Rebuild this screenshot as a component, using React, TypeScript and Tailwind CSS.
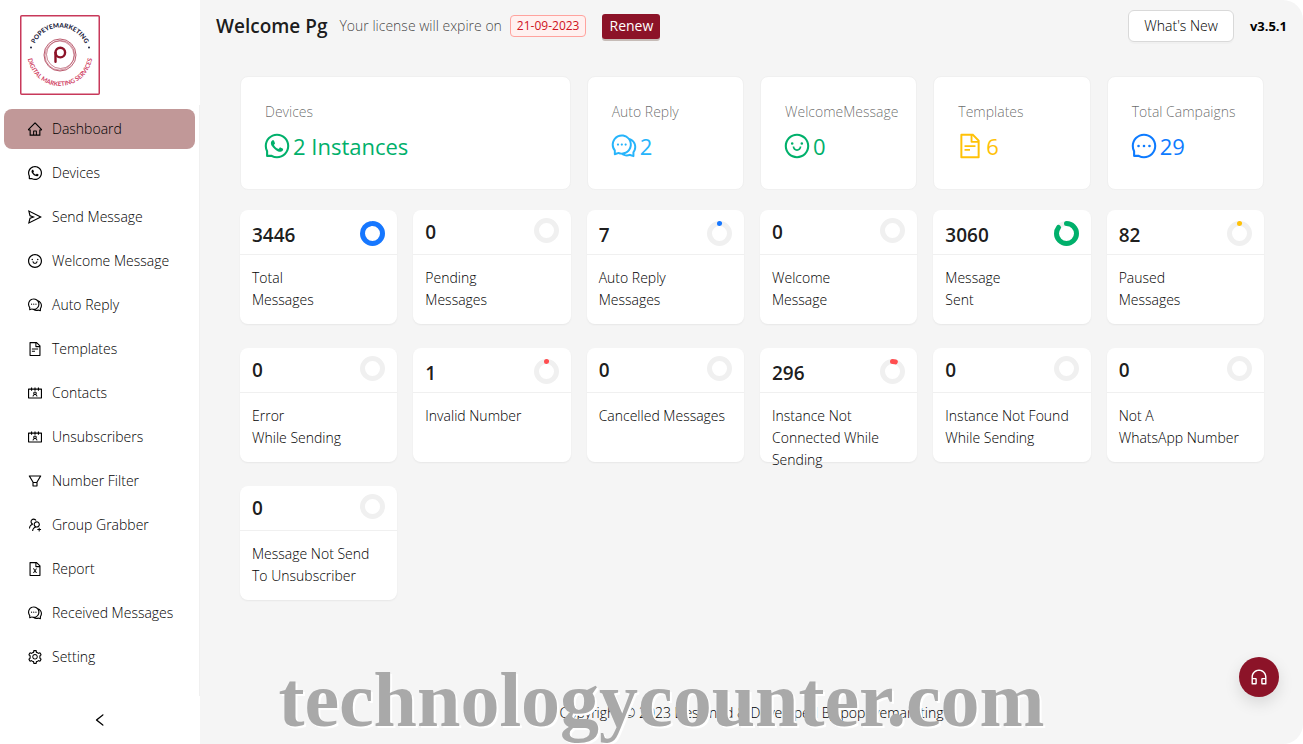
import clsx from 'clsx';
import type { ReactNode } from 'react';
import type { IconType } from 'react-icons';
import {
  AiOutlineComment,
  AiOutlineContacts,
  AiOutlineCustomerService,
  AiOutlineFileExcel,
  AiOutlineFileText,
  AiOutlineFilter,
  AiOutlineHome,
  AiOutlineLeft,
  AiOutlineMessage,
  AiOutlineSend,
  AiOutlineSetting,
  AiOutlineSmile,
  AiOutlineUsergroupAdd,
  AiOutlineWhatsApp,
} from 'react-icons/ai';

const menuItems: { label: string; icon: IconType; active?: boolean }[] = [
  { label: 'Dashboard', icon: AiOutlineHome, active: true },
  { label: 'Devices', icon: AiOutlineWhatsApp },
  { label: 'Send Message', icon: AiOutlineSend },
  { label: 'Welcome Message', icon: AiOutlineSmile },
  { label: 'Auto Reply', icon: AiOutlineComment },
  { label: 'Templates', icon: AiOutlineFileText },
  { label: 'Contacts', icon: AiOutlineContacts },
  { label: 'Unsubscribers', icon: AiOutlineContacts },
  { label: 'Number Filter', icon: AiOutlineFilter },
  { label: 'Group Grabber', icon: AiOutlineUsergroupAdd },
  { label: 'Report', icon: AiOutlineFileExcel },
  { label: 'Received Messages', icon: AiOutlineComment },
  { label: 'Setting', icon: AiOutlineSetting },
];

const summaries = [
  {
    label: 'Devices',
    value: '2 Instances',
    icon: AiOutlineWhatsApp,
    color: 'text-[#00b06b]',
    wide: true,
  },
  {
    label: 'Auto Reply',
    value: '2',
    icon: AiOutlineComment,
    color: 'text-[#26b4fb]',
  },
  {
    label: 'WelcomeMessage',
    value: '0',
    icon: AiOutlineSmile,
    color: 'text-[#00b06b]',
  },
  {
    label: 'Templates',
    value: '6',
    icon: AiOutlineFileText,
    color: 'text-[#ffc107]',
  },
  {
    label: 'Total Campaigns',
    value: '29',
    icon: AiOutlineMessage,
    color: 'text-[#0d7bff]',
  },
];

const TOTAL = 3446;

const stats = [
  { value: TOTAL, lines: ['Total', 'Messages'], color: '#1677ff' },
  { value: 0, lines: ['Pending', 'Messages'], color: '#1677ff' },
  { value: 7, lines: ['Auto Reply', 'Messages'], color: '#1677ff' },
  { value: 0, lines: ['Welcome', 'Message'], color: '#1677ff' },
  { value: 3060, lines: ['Message', 'Sent'], color: '#00b06b' },
  { value: 82, lines: ['Paused', 'Messages'], color: '#ffc107' },
  { value: 0, lines: ['Error', 'While Sending'], color: '#ff4d4f' },
  { value: 1, lines: ['Invalid Number'], color: '#ff4d4f' },
  { value: 0, lines: ['Cancelled Messages'], color: '#ff4d4f' },
  {
    value: 296,
    lines: ['Instance Not', 'Connected While', 'Sending'],
    color: '#ff4d4f',
  },
  {
    value: 0,
    lines: ['Instance Not Found', 'While Sending'],
    color: '#ff4d4f',
  },
  { value: 0, lines: ['Not A', 'WhatsApp Number'], color: '#ff4d4f' },
  {
    value: 0,
    lines: ['Message Not Send', 'To Unsubscriber'],
    color: '#ff4d4f',
  },
];

function Logo() {
  return (
    <svg
      viewBox="0 0 80 80"
      className="size-20"
      role="img"
      aria-label="Popeyemarketing"
    >
      <defs>
        <path id="logo-top" d="M12.5 40a27.5 27.5 0 0 1 55 0" />
        <path id="logo-bottom" d="M7.5 38.5a32.5 32.5 0 0 0 65 0" />
      </defs>
      <rect
        x="0.75"
        y="0.75"
        width="78.5"
        height="78.5"
        rx="1"
        fill="#fff"
        stroke="#c8395a"
        strokeWidth="1.5"
      />
      <text
        fontFamily="Lato, sans-serif"
        fontSize="6.4"
        fontWeight="900"
        fill="#1d2440"
        textAnchor="middle"
      >
        <textPath href="#logo-top" startOffset="50%">
          POPEYEMARKETING
        </textPath>
      </text>
      <text
        fontFamily="Lato, sans-serif"
        fontSize="6.2"
        fontWeight="700"
        fill="#d0405f"
        textAnchor="middle"
      >
        <textPath href="#logo-bottom" startOffset="50%">
          DIGITAL MARKETING SERVICES
        </textPath>
      </text>
      <circle cx="11" cy="32.5" r="1" fill="#1d2440" />
      <circle cx="69" cy="32.5" r="1" fill="#1d2440" />
      <g fill="none" stroke="#a8324a">
        <circle cx="40" cy="40" r="16" strokeWidth="0.8" />
        <circle cx="39.5" cy="40.5" r="14.5" strokeWidth="0.5" />
        <circle cx="40.5" cy="39.5" r="14" strokeWidth="0.6" />
      </g>
      <g fill="none" stroke="#8c1328" strokeWidth="2.4" strokeLinecap="round">
        <circle cx="40.3" cy="37.6" r="4.8" />
        <path d="M35.5 37.6v9.2" />
      </g>
    </svg>
  );
}

function Sidebar() {
  return (
    <aside className="flex w-50 shrink-0 flex-col bg-white">
      <a href="#dashboard" className="mt-[15px] ml-5 self-start">
        <Logo />
      </a>
      <nav className="mt-[10px] flex-1 border-r border-[#f0f0f0]">
        <ul className="flex flex-col gap-1 px-1 pt-1">
          {menuItems.map(({ label, icon: Icon, active }) => (
            <li key={label}>
              <a
                href={`#${label.toLowerCase().replace(' ', '-')}`}
                className={clsx(
                  'flex h-10 items-center gap-[9px] rounded-lg pl-[23px]',
                  active && 'bg-[#c19898]'
                )}
              >
                <Icon className="size-4" />
                {label}
              </a>
            </li>
          ))}
        </ul>
      </nav>
      <button
        type="button"
        aria-label="Collapse menu"
        className="flex h-12 items-center justify-center"
      >
        <AiOutlineLeft className="size-4" />
      </button>
    </aside>
  );
}

function Header() {
  return (
    <header className="flex h-[52px] items-center justify-between px-4">
      <div className="flex items-center">
        <h1 className="text-[19px] font-semibold text-black/90">Welcome Pg</h1>
        <span className="ml-3 text-black/75">Your license will expire on</span>
        <span className="ml-2 rounded border border-[#ffa39e] bg-[#fff1f0] px-[6px] text-xs leading-5 font-normal text-[#cf1322]">
          21-09-2023
        </span>
        <button
          type="button"
          className="ml-4 h-[25px] rounded-[3px] bg-[#8c1328] px-[7px] font-medium text-white shadow-[0_2px_0_rgba(60,20,0,0.25)]"
        >
          Renew
        </button>
      </div>
      <div className="flex items-center gap-4">
        <button
          type="button"
          className="h-8 rounded-md border border-[#d9d9d9] bg-white px-[15px] shadow-[0_2px_0_rgba(0,0,0,0.02)]"
        >
          What&apos;s New
        </button>
        <strong className="text-[13px] font-bold">v3.5.1</strong>
      </div>
    </header>
  );
}

function SummaryCard({
  label,
  wide,
  color,
  children,
}: {
  label: string;
  wide?: boolean;
  color: string;
  children: ReactNode;
}) {
  return (
    <section
      className={clsx(
        'rounded-lg border border-[#f0f0f0] bg-white px-6 py-6',
        wide && 'col-span-2'
      )}
    >
      <h2 className="whitespace-nowrap text-black/60">{label}</h2>
      <p
        className={clsx(
          '-ml-0.5 mt-1 flex items-center gap-0.5 text-[22px] font-normal',
          color
        )}
      >
        {children}
      </p>
    </section>
  );
}

function Ring({ value, color }: { value: number; color: string }) {
  const length = Math.PI * 20;
  // the round cap takes up half a stroke width of the arc
  const arc = Math.max((value / TOTAL) * length - 2.5, 0.1);
  return (
    <svg
      viewBox="0 0 25 25"
      className="size-[25px]"
      fill="none"
      strokeWidth="5"
      aria-hidden="true"
    >
      <circle cx="12.5" cy="12.5" r="10" stroke="#f0f0f0" />
      {value > 0 && (
        <circle
          cx="12.5"
          cy="12.5"
          r="10"
          stroke={color}
          strokeLinecap="round"
          strokeDasharray={`${arc} ${length}`}
          transform="rotate(-90 12.5 12.5)"
        />
      )}
    </svg>
  );
}

function StatCard({
  value,
  lines,
  color,
}: {
  value: number;
  lines: string[];
  color: string;
}) {
  return (
    <section className="h-[114px] rounded-lg bg-white shadow-[0_1px_2px_rgba(0,0,0,0.06)]">
      <div
        className={clsx(
          'flex h-[45px] items-start justify-between border-b border-[#f0f0f0] px-3',
          value > 0 ? 'pt-[11px]' : 'pt-2'
        )}
      >
        <span className="text-[19px] leading-7 font-semibold text-black/90">
          {value}
        </span>
        <Ring value={value} color={color} />
      </div>
      <h3 className="px-3 pt-3">
        {lines.map((line) => (
          <span key={line} className="block whitespace-nowrap">
            {line}
          </span>
        ))}
      </h3>
    </section>
  );
}

export default function App() {
  return (
    <div className="relative flex min-h-screen bg-white font-['Open_Sans','Noto_Sans',sans-serif] text-sm leading-[22px] font-light text-black">
      <Sidebar />
      <div className="flex flex-1 flex-col rounded-r-[20px] bg-[#f5f5f5]">
        <Header />
        <main className="flex-1 pt-6 pr-[39px] pl-10">
          <div className="grid grid-cols-6 gap-4">
            {summaries.map(({ label, value, icon: Icon, color, wide }) => (
              <SummaryCard key={label} label={label} color={color} wide={wide}>
                <Icon className="size-7" />
                <span className="leading-[38px]">{value}</span>
              </SummaryCard>
            ))}
          </div>
          <div className="mt-5 grid grid-cols-6 gap-x-4 gap-y-6">
            {stats.map((stat) => (
              <StatCard key={stat.lines.join(' ')} {...stat} />
            ))}
          </div>
        </main>
        <footer className="pb-5 text-center">
          Copyright © 2023 Designed &amp; Developed By popeyemareting
        </footer>
      </div>
      <button
        type="button"
        aria-label="Support"
        className="absolute right-6 bottom-[47px] flex size-10 items-center justify-center rounded-full bg-[#8c1328] text-white shadow-[0_6px_16px_rgba(0,0,0,0.12)]"
      >
        <AiOutlineCustomerService className="size-5" />
      </button>
      <div className="pointer-events-none absolute inset-x-0 bottom-0 pl-5 text-center font-['Liberation_Serif',serif] text-[78px] leading-[88px] font-bold text-[#a9a9a9] [text-shadow:2px_2px_0_#fff]">
        technologycounter.com
      </div>
    </div>
  );
}
